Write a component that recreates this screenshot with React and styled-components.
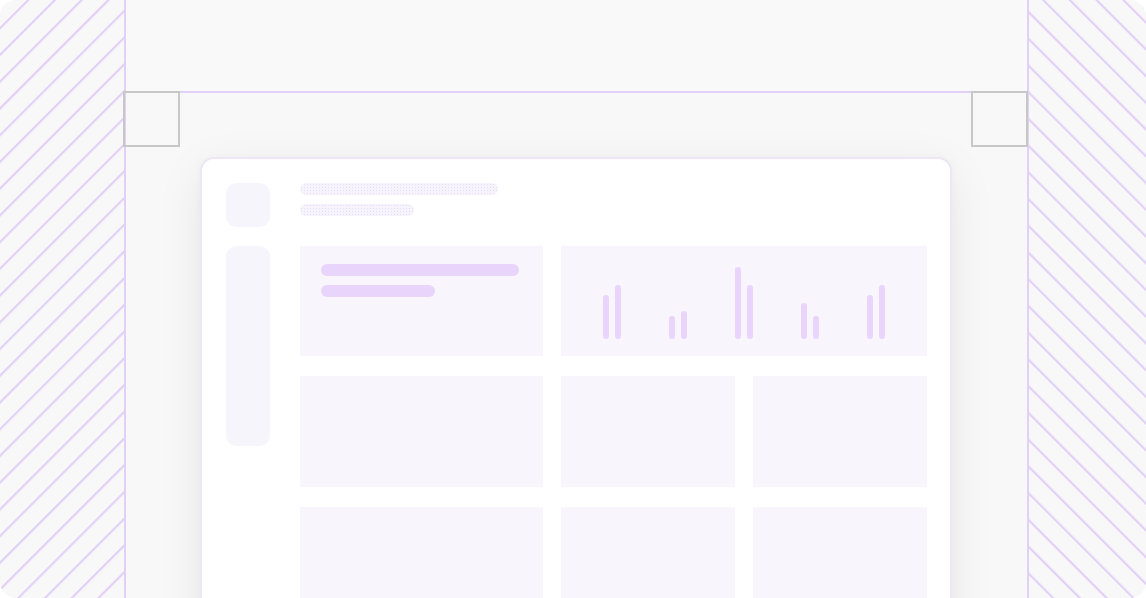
import styled, { createGlobalStyle } from "styled-components";

const GlobalStyle = createGlobalStyle`
    html, body {
        margin: 0;
        padding: 0;
        background: #ffffff;
        font-family: "Inter", "Liberation Sans", sans-serif;
    }
`;

const Frame = styled.div`
    width: 1146px;
    height: 598px;
    display: flex;
    background: #f8f8f8;
    border-radius: 16px;
    overflow: hidden;
`;

const Hatch = styled.div`
    box-sizing: border-box;
    flex: 0 0 ${(p) => p.$width}px;
    height: 100%;
    border-${(p) => (p.$side === "left" ? "right" : "left")}: 2px solid #e3d0f8;

    svg {
        display: block;
        width: 100%;
        height: 100%;
    }
`;

const Center = styled.div`
    position: relative;
    flex: 1;
    display: flex;
    flex-direction: column;
    min-width: 0;
`;

const TopBand = styled.div`
    box-sizing: border-box;
    flex: 0 0 93px;
    background: #f9f9f9;
    border-bottom: 2px solid #e3d0f8;
`;

const CornerBox = styled.div`
    position: absolute;
    top: 91px;
    ${(p) => (p.$side === "left" ? "left: -3px;" : "right: -1px;")}
    box-sizing: border-box;
    width: 57px;
    height: 56px;
    border: 2px solid #c7c7c7;
`;

const Stage = styled.div`
    flex: 1;
    padding: 64px 75px 0 74px;
`;

const Card = styled.div`
    box-sizing: border-box;
    height: 520px;
    background: #ffffff;
    border: 2px solid #ece6f5;
    border-radius: 14px;
    box-shadow: 0 12px 48px rgba(40, 30, 60, 0.07), 0 2px 8px rgba(40, 30, 60, 0.03);
    padding: 24px 23px 0 24px;
    display: grid;
    grid-template-columns: 44px 1fr;
    column-gap: 30px;
`;

const Side = styled.div`
    display: flex;
    flex-direction: column;
    gap: 19px;
`;

const Block = styled.div`
    height: ${(p) => p.$h}px;
    background: #f7f5fc;
    border-radius: 10px;
`;

const Main = styled.div`
    display: flex;
    flex-direction: column;
`;

const Heading = styled.div`
    display: flex;
    flex-direction: column;
    gap: 9px;
    margin-bottom: 30px;
`;

const Dotted = styled.div`
    width: ${(p) => p.$w}px;
    height: 12px;
    border-radius: 6px;
    background-color: #f7f3fc;
    background-image: radial-gradient(#e6dcf5 0.8px, transparent 1px);
    background-size: 3px 3px;
`;

const Grid = styled.div`
    display: grid;
    grid-template-columns: 243px 174px 174px;
    grid-template-rows: 110px 111px 111px;
    column-gap: 18px;
    row-gap: 20px;
`;

const Panel = styled.div`
    background: #f8f5fd;
    grid-column: ${(p) => p.$span || "auto"};
`;

const TextPanel = styled(Panel)`
    padding: 18px 21px;
    display: flex;
    flex-direction: column;
    gap: 9px;
`;

const Line = styled.div`
    width: ${(p) => p.$w}px;
    height: 12px;
    border-radius: 6px;
    background: #e9d5fb;
`;

const ChartPanel = styled(Panel)`
    display: flex;
    justify-content: center;
    align-items: flex-end;
    gap: 48px;
    padding-bottom: 17px;
    box-sizing: border-box;
`;

const Pair = styled.div`
    display: flex;
    align-items: flex-end;
    gap: 6px;
`;

const Bar = styled.div`
    width: 6px;
    border-radius: 3px;
    background: #e9d5fb;
`;

const chart = [
    [44, 54],
    [23, 28],
    [72, 54],
    [36, 23],
    [44, 54],
];

function Stripes({ id, transform }) {
    return (
        <svg xmlns="http://www.w3.org/2000/svg">
            <defs>
                <pattern
                    id={id}
                    width="18.9"
                    height="18.9"
                    patternUnits="userSpaceOnUse"
                    patternTransform={transform}
                >
                    <rect x="0" y="0" width="2.2" height="18.9" fill="#e3d0f8" />
                </pattern>
            </defs>
            <rect width="100%" height="100%" fill={`url(#${id})`} />
        </svg>
    );
}

export default function App() {
    return (
        <>
            <GlobalStyle />
            <Frame>
                <Hatch $side="left" $width={126}>
                    <Stripes id="hatch-left" transform="translate(0 0) rotate(45)" />
                </Hatch>
                <Center>
                    <TopBand />
                    <CornerBox $side="left" />
                    <CornerBox $side="right" />
                    <Stage>
                        <Card>
                            <Side>
                                <Block $h={44} />
                                <Block $h={200} />
                            </Side>
                            <Main>
                                <Heading>
                                    <Dotted $w={198} />
                                    <Dotted $w={114} />
                                </Heading>
                                <Grid>
                                    <TextPanel>
                                        <Line $w={198} />
                                        <Line $w={114} />
                                    </TextPanel>
                                    <ChartPanel $span="2 / 4">
                                        {chart.map((pair, i) => (
                                            <Pair key={i}>
                                                {pair.map((h, j) => (
                                                    <Bar key={j} style={{ height: h }} />
                                                ))}
                                            </Pair>
                                        ))}
                                    </ChartPanel>
                                    <Panel />
                                    <Panel />
                                    <Panel />
                                    <Panel />
                                    <Panel />
                                    <Panel />
                                </Grid>
                            </Main>
                        </Card>
                    </Stage>
                </Center>
                <Hatch $side="right" $width={119}>
                    <Stripes id="hatch-right" transform="translate(12.6 0) rotate(-45)" />
                </Hatch>
            </Frame>
        </>
    );
}
